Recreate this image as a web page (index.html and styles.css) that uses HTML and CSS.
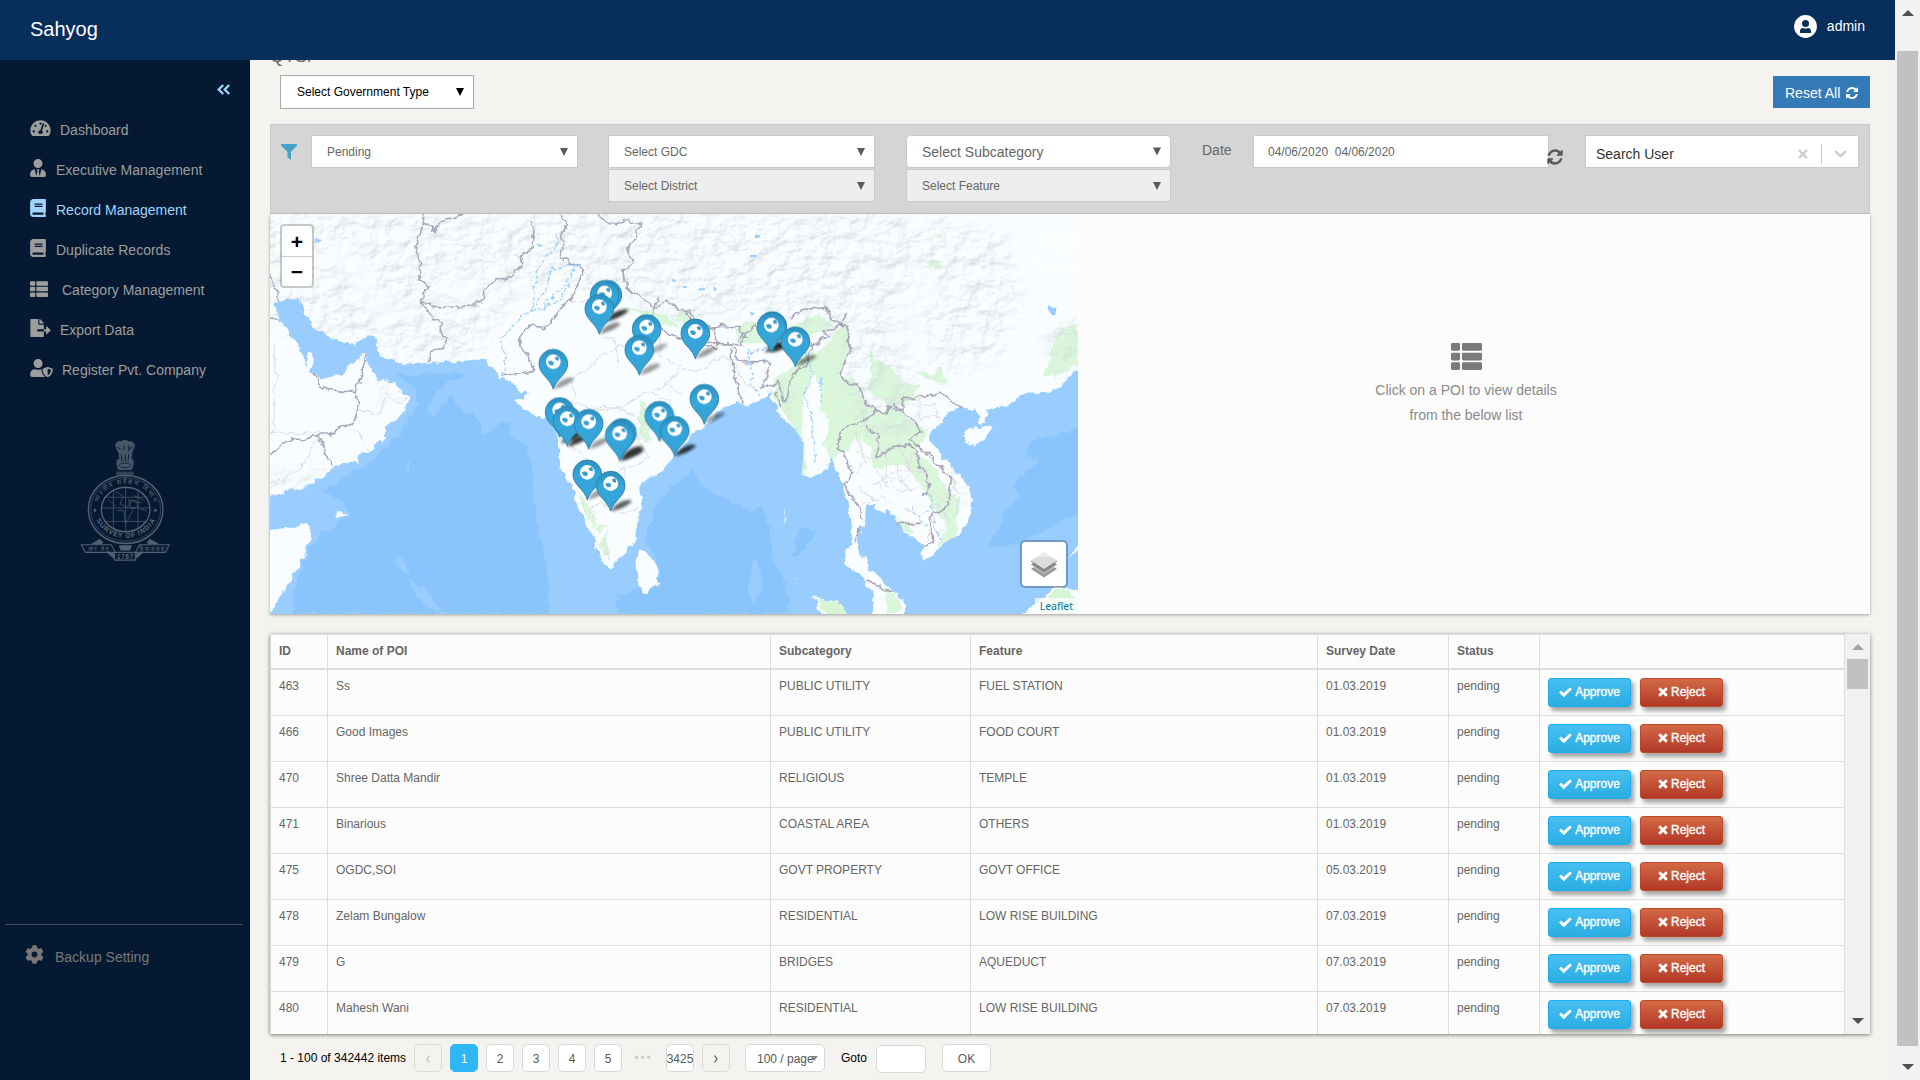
FILE: index.html
```html
<!DOCTYPE html>
<html lang="en">
<head>
<meta charset="utf-8">
<title>Sahyog</title>
<link rel="stylesheet" href="styles.css">
</head>
<body>
<svg class="defs" width="0" height="0">
  <symbol id="i-dash" viewBox="0 0 576 512"><path d="M288 32C128.940 32 0 160.940 0 320c0 52.800 14.250 102.260 39.060 144.800 5.610 9.620 16.300 15.200 27.440 15.200h443c11.140 0 21.830-5.580 27.440-15.200C561.750 422.260 576 372.800 576 320c0-159.060-128.940-288-288-288zm0 64c14.710 0 26.580 10.130 30.320 23.650-1.110 2.260-2.640 4.230-3.450 6.670l-9.220 27.670c-5.130 3.490-10.970 6.010-17.640 6.010-17.670 0-32-14.330-32-32S270.330 96 288 96zM96 384c-17.670 0-32-14.330-32-32s14.330-32 32-32 32 14.330 32 32-14.330 32-32 32zm48-160c-17.670 0-32-14.330-32-32s14.330-32 32-32 32 14.330 32 32-14.330 32-32 32zm246.770-72.410l-61.330 184C343.130 347.330 352 364.540 352 384c0 11.720-3.380 22.550-8.880 32H232.880c-5.500-9.450-8.880-20.280-8.880-32 0-33.940 26.500-61.430 59.900-63.590l61.340-184.010c4.170-12.560 17.730-19.450 30.360-15.170 12.570 4.190 19.350 17.790 15.170 30.360zm14.660 57.200l15.520-46.550c3.470-1.290 7.130-2.230 11.050-2.230 17.670 0 32 14.330 32 32s-14.330 32-32 32c-11.380-.01-20.890-6.280-26.570-15.220zM480 384c-17.670 0-32-14.330-32-32s14.330-32 32-32 32 14.330 32 32-14.330 32-32 32z"/></symbol>
  <symbol id="i-tie" viewBox="0 0 448 512"><path d="M224 256c70.700 0 128-57.300 128-128S294.700 0 224 0 96 57.300 96 128s57.300 128 128 128zm95.800 32.600L272 480l-32-136 32-56h-96l32 56-32 136-47.800-191.400C56.900 292 0 350.300 0 422.400V464c0 26.500 21.500 48 48 48h352c26.500 0 48-21.500 48-48v-41.600c0-72.100-56.900-130.400-128.200-133.800z"/></symbol>
  <symbol id="i-book" viewBox="0 0 448 512"><path d="M448 360V24c0-13.300-10.700-24-24-24H96C43 0 0 43 0 96v320c0 53 43 96 96 96h328c13.300 0 24-10.700 24-24v-16c0-7.500-3.500-14.300-8.900-18.700-4.200-15.400-4.200-59.300 0-74.700 5.400-4.300 8.900-11.100 8.900-18.600zM128 134c0-3.300 2.700-6 6-6h212c3.300 0 6 2.700 6 6v20c0 3.300-2.700 6-6 6H134c-3.300 0-6-2.700-6-6v-20zm0 64c0-3.300 2.700-6 6-6h212c3.300 0 6 2.700 6 6v20c0 3.300-2.700 6-6 6H134c-3.300 0-6-2.700-6-6v-20zm253.400 250H96c-17.700 0-32-14.300-32-32 0-17.600 14.400-32 32-32h285.400c-1.900 17.100-1.900 46.900 0 64z"/></symbol>
  <symbol id="i-list" viewBox="0 0 512 512"><rect x="0" y="32" width="149" height="128" rx="24"/><rect x="181" y="32" width="331" height="128" rx="24"/><rect x="0" y="192" width="149" height="128" rx="24"/><rect x="181" y="192" width="331" height="128" rx="24"/><rect x="0" y="352" width="149" height="128" rx="24"/><rect x="181" y="352" width="331" height="128" rx="24"/></symbol>
  <symbol id="i-export" viewBox="0 0 576 512"><path d="M384 121.900c0-6.300-2.500-12.400-7-16.900L279.100 7c-4.500-4.500-10.600-7-17-7H256v128h128zM571 308l-95.700-96.400c-10.100-10.100-27.400-3-27.400 11.300V288h-64v64h64v65.200c0 14.300 17.300 21.400 27.400 11.300L571 332c6.600-6.600 6.600-17.400 0-24zm-379 28v-32c0-8.800 7.200-16 16-16h176V160H248c-13.200 0-24-10.800-24-24V0H24C10.700 0 0 10.700 0 24v464c0 13.300 10.700 24 24 24h336c13.300 0 24-10.700 24-24V352H208c-8.800 0-16-7.200-16-16z"/></symbol>
  <symbol id="i-shield" viewBox="0 0 640 512"><path d="M622.300 271.100l-115.200-45c-4.100-1.600-12.600-3.700-22.200 0l-115.200 45c-10.700 4.200-17.700 14-17.700 24.900 0 111.600 68.700 188.800 132.900 213.900 9.600 3.700 18 1.600 22.200 0C558.400 489.900 640 420.500 640 296c0-10.900-7-20.700-17.700-24.900zM496 462.400V273.300l95.500 37.300c-5.600 87.100-60.900 135.400-95.500 151.800zM224 256c70.700 0 128-57.300 128-128S294.700 0 224 0 96 57.300 96 128s57.300 128 128 128zm96 40c0-2.500.8-4.800 1.100-7.200-2.500-.1-4.900-.8-7.500-.8h-16.700c-22.200 10.200-46.900 16-72.900 16s-50.600-5.800-72.900-16h-16.700C60.200 288 0 348.200 0 422.400V464c0 26.500 21.500 48 48 48h352c6.800 0 13.300-1.500 19.200-4-54-42.900-99.200-116.700-99.200-212z"/></symbol>
  <symbol id="i-cog" viewBox="0 0 512 512"><path d="M487.400 315.700l-42.600-24.600c4.300-23.200 4.300-47 0-70.200l42.600-24.600c4.900-2.800 7.100-8.600 5.500-14-11.100-35.600-30-67.800-54.700-94.600-3.800-4.100-10-5.100-14.800-2.300L380.800 110c-17.900-15.400-38.500-27.300-60.800-35.100V25.800c0-5.600-3.900-10.500-9.400-11.700-36.700-8.200-74.300-7.800-109.200 0-5.500 1.200-9.400 6.100-9.400 11.700V75c-22.200 7.900-42.800 19.800-60.800 35.100L88.700 85.500c-4.900-2.800-11-1.900-14.800 2.300-24.700 26.700-43.600 58.900-54.700 94.600-1.700 5.400.6 11.200 5.500 14L67.300 221c-4.300 23.200-4.300 47 0 70.200l-42.600 24.600c-4.900 2.800-7.100 8.600-5.500 14 11.100 35.600 30 67.800 54.700 94.600 3.800 4.100 10 5.100 14.800 2.300l42.600-24.600c17.900 15.400 38.500 27.300 60.800 35.100v49.200c0 5.600 3.900 10.500 9.400 11.700 36.700 8.200 74.300 7.800 109.200 0 5.500-1.200 9.400-6.100 9.400-11.700v-49.200c22.200-7.900 42.800-19.800 60.800-35.100l42.600 24.600c4.900 2.800 11 1.900 14.800-2.300 24.700-26.700 43.600-58.900 54.700-94.600 1.500-5.500-.7-11.300-5.600-14.100zM256 336c-44.100 0-80-35.900-80-80s35.900-80 80-80 80 35.900 80 80-35.900 80-80 80z"/></symbol>
  <symbol id="i-refresh" viewBox="0 0 1792 1792"><path d="M1639 1056q0 5-1 7-64 268-268 434.500t-478 166.500q-146 0-282.500-55t-243.500-157l-129 129q-19 19-45 19t-45-19-19-45v-448q0-26 19-45t45-19h448q26 0 45 19t19 45-19 45l-137 137q71 66 161 102t187 36q134 0 250-65t186-179q11-17 53-117 8-23 30-23h192q13 0 22.500 9.500t9.500 22.500zm25-800v448q0 26-19 45t-45 19h-448q-26 0-45-19t-19-45 19-45l138-138q-148-137-349-137-134 0-250 65t-186 179q-11 17-53 117-8 23-30 23h-199q-13 0-22.500-9.500t-9.500-22.500v-7q65-268 270-434.500t480-166.500q146 0 284 55.500t245 156.500l130-129q19-19 45-19t45 19 19 45z"/></symbol>
  <symbol id="i-check" viewBox="0 0 13 11"><path d="M0 5.600 2 3.600 4.600 6 10.800.4 12.900 2.200 4.800 10.200z"/></symbol>
  <symbol id="i-times" viewBox="0 0 10 10"><path d="M2.200.2 5 3 7.800.2 9.800 2.200 7 5 9.800 7.800 7.800 9.800 5 7 2.200 9.800.2 7.800 3 5 .2 2.200z"/></symbol>
  <symbol id="i-down" viewBox="0 0 8 8"><path d="M0 0h8L4 8z"/></symbol>
</svg>

<div class="window">
  <div class="app">
    <header class="topbar">
      <span class="brand">Sahyog</span>
      <div class="user">
        <svg width="23" height="23" viewBox="0 0 23 23"><circle cx="11.500" cy="11.500" r="11.400" fill="#fff"/><circle cx="11.500" cy="8.500" r="3.500" fill="#082e5b"/><path d="M6 18v-1.800c0-2 1.300-3.200 3-3.200.8.400 1.600.6 2.500.6s1.700-.2 2.500-.6c1.700 0 3 1.200 3 3.200V18z" fill="#082e5b"/></svg>
        <span>admin</span>
      </div>
    </header>
    <div class="body">
      <aside class="sidebar">
        <div class="collapse"><svg width="13" height="11" viewBox="0 0 13 11"><path d="M6.200 1 1.700 5.500l4.500 4.500M12.200 1 7.700 5.500l4.500 4.500" fill="none" stroke="#9fd5ff" stroke-width="2.300"/></svg></div>
        <nav class="menu">
          <a class="wide"><svg width="21" height="18"><use href="#i-dash"/></svg>Dashboard</a>
          <a><svg width="16" height="18"><use href="#i-tie"/></svg>Executive Management</a>
          <a class="active"><svg width="16" height="18"><use href="#i-book"/></svg>Record Management</a>
          <a><svg width="16" height="18"><use href="#i-book"/></svg>Duplicate Records</a>
          <a class="cat"><svg width="18" height="18"><use href="#i-list"/></svg>Category Management</a>
          <a class="wide"><svg width="21" height="18"><use href="#i-export"/></svg>Export Data</a>
          <a class="wide"><svg width="23" height="18"><use href="#i-shield"/></svg>Register Pvt. Company</a>
        </nav>
        <svg class="emblem" width="90" height="123" viewBox="240 103 270 321" preserveAspectRatio="none">
          <g fill="none" stroke="#566475" stroke-width="4">
            <ellipse cx="377" cy="287" rx="112" ry="89"/>
            <ellipse cx="377" cy="287" rx="105" ry="83" stroke-width="1.500"/>
            <ellipse cx="377" cy="287" rx="73" ry="58"/>
            <path stroke-width="1.800" d="M377 229v116M340 238v98M414 238v98M305 283h144M312 255h130M314 318h126M345 240l25 12-10 20 22 10 15-20 28 8M352 290l20 0 4 34 10-14 16-28M325 262l22 16M400 250l30 12M420 285l20 6M386 262l20 4 10 14-24 4z"/>
          </g>
          <g fill="#526071">
            <path d="M346 118q6-12 18-9 10-8 22 0 14-2 19 11-3 10-8 18l-3 18h5q4 8 1 16l-5 12h-40l-5-12q-2-9 2-16h6l-3-18q-8-8-9-20z" opacity=".85"/>
            <path d="M349 188h52v10h-52z" opacity=".6"/>
            <path d="M352 124l10 6m10-10v12m14-12v14m10-12-8 10m-24 12 2 18m10-20v20m10-20-2 20" stroke="#061a32" stroke-width="2.500"/>
            <ellipse cx="375" cy="172" rx="18" ry="6" fill="none" stroke="#061a32" stroke-width="2"/>
            <path d="M272 378l28-15 10 10-5 5zM478 378l-28-15-10 10 5 5zM318 398l27 4v16zM432 398l-27 4v16zM356 380h40l-6 14h-28z"/>
            <circle cx="285" cy="289" r="4"/><circle cx="466" cy="289" r="4"/>
          </g>
          <path d="M244 379h90l12 20h-90zM508 379h-90l-12 20h90zM344 399h62v20h-62z" fill="#061a32" stroke="#526071" stroke-width="3"/>
          <path id="arcTop" d="M291 287a86 68 0 0 1 172 0" fill="none"/>
          <path id="arcBot" d="M283 300a96 77 0 0 0 188 0" fill="none"/>
          <g class="emblem-text">
            <text font-size="18"><textPath href="#arcTop" startOffset="50%" text-anchor="middle" textLength="205">भारतीय सर्वेक्षण विभाग</textPath></text>
            <text font-size="19" font-weight="bold"><textPath href="#arcBot" startOffset="50%" text-anchor="middle" textLength="208">SURVEY OF INDIA</textPath></text>
            <text x="295" y="395" font-size="15" text-anchor="middle" textLength="62">आर सेतु</text>
            <text x="455" y="395" font-size="15" text-anchor="middle" textLength="74">हिमाचलम्</text>
            <text x="375" y="416" font-size="18" text-anchor="middle" font-weight="bold" textLength="48">1767</text>
          </g>
        </svg>
        <div class="backup"><svg width="19" height="19"><use href="#i-cog"/></svg>Backup Setting</div>
      </aside>

      <main class="main">
        <h1 class="title">QTSr</h1>
        <div class="tools">
          <div class="select gov"><span>Select Government Type</span><svg width="8" height="8"><use href="#i-down"/></svg></div>
          <button class="reset">Reset All <svg width="14" height="14"><use href="#i-refresh"/></svg></button>
        </div>

        <section class="filters">
          <svg class="funnel" width="16" height="16" viewBox="0 0 16 16"><path d="M0 0h16v1.500L10 8v8l-3.500-2.500V8L0 1.500z" fill="#45a3c9"/></svg>
          <div class="stack status"><div class="select"><span>Pending</span><svg width="8" height="8"><use href="#i-down"/></svg></div></div>
          <div class="stack gdc">
            <div class="select"><span>Select GDC</span><svg width="8" height="8"><use href="#i-down"/></svg></div>
            <div class="select off"><span>Select District</span><svg width="8" height="8"><use href="#i-down"/></svg></div>
          </div>
          <div class="stack sub">
            <div class="select big"><span>Select Subcategory</span><svg width="8" height="9"><use href="#i-down"/></svg></div>
            <div class="select off"><span>Select Feature</span><svg width="8" height="8"><use href="#i-down"/></svg></div>
          </div>
          <span class="date-label">Date</span>
          <div class="date">04/06/2020&nbsp; 04/06/2020</div>
          <svg class="date-refresh" width="18" height="18"><use href="#i-refresh"/></svg>
          <div class="search"><span>Search User</span>
            <svg width="10" height="10" viewBox="0 0 10 10"><path d="M1 1l8 8M9 1 1 9" stroke="#ccc" stroke-width="2.400"/></svg><i></i>
            <svg width="13" height="8" viewBox="0 0 13 8"><path d="M1.200 1.200l5.300 5 5.300-5" fill="none" stroke="#ccc" stroke-width="2.300"/></svg></div>
        </section>

        <section class="viewer">
          <div class="map">
            <svg class="map-canvas" width="808" height="400" viewBox="0 12 2424 1200">
              <defs>
                <filter id="rough" x="0" y="0" width="100%" height="100%"><feTurbulence type="fractalNoise" baseFrequency=".035" numOctaves="3" seed="4" result="n"/><feDisplacementMap in="SourceGraphic" in2="n" scale="26" xChannelSelector="R" yChannelSelector="G"/></filter>
                <filter id="relief" x="0" y="0" width="100%" height="100%"><feTurbulence type="fractalNoise" baseFrequency=".018 .026" numOctaves="7" seed="9" result="t"/><feDiffuseLighting in="t" surfaceScale="13" lighting-color="#fff" result="l"><feDistantLight azimuth="225" elevation="58"/></feDiffuseLighting><feColorMatrix in="l" type="matrix" values="0 0 0 0 .62  0 0 0 0 .68  0 0 0 0 .71  -1.300 0 0 0 1.180" result="s"/><feComposite in="s" in2="SourceGraphic" operator="in"/></filter>
                <filter id="soft"><feGaussianBlur stdDeviation="4"/></filter>
                <filter id="softer"><feGaussianBlur stdDeviation="24"/></filter>
                <linearGradient id="pin" x1="0" y1="0" x2="0" y2="1"><stop offset="0" stop-color="#2c8fc0"/><stop offset=".35" stop-color="#35a5db"/><stop offset="1" stop-color="#35a5d8"/></linearGradient>
                <clipPath id="landclip"><path d="M0 0H2424V480L2380 520 2340 545 2250 552 2240 575 2150 600 2145 640 2125 635 2120 600 2085 590 2050 600 2010 640 1985 660 1980 690 2020 740 2060 785 2090 820 2105 870 2102 930 2070 970 2020 1000 1955 1055 1965 1010 1895 965 1850 905 1788 885 1765 985 1760 1030 1885 1150 1902 1212H1810L1730 1065 1745 940 1685 740 1630 800 1595 795 1602 700 1500 545 1395 590 1230 740 1110 820 1100 990 1022 1075 965 970 865 680 795 622 732 570 645 448 400 462 330 435 315 385 195 390 135 355 85 265 10 280 105 465 145 502 290 430 330 510 415 560 345 685 260 755 130 820 0 865z"/></clipPath>
                <g id="marker"><path d="M0 0C-9-32-43-44-43-76A43 43 0 0 1 43-76C43-44 9-32 0 0z" fill="url(#pin)" stroke="#2b83ad" stroke-width="3"/><circle cx="0" cy="-82" r="22" fill="#fff"/><path d="M4-95l10-3q5 7 2 13l-9-2zM-17-82l10-3 9 5-3 9-10-1z" fill="#3a9dcc"/></g>
                <path id="mshadow" d="M0 0q14-24 40-32 20-5 23 1-6 10-28 20-20 9-35 11z"/>
              </defs>
              <rect y="12" width="2424" height="1200" fill="#9acdff"/>
              <g fill="#89c4fc" filter="url(#rough)">
                <path d="M375 495l215-7-60 27-30 25-30 60 20 20 55-70 15 35 60 35 20 60 60-50 20 10 5 40 55 40 10 100 10 120 30 120 10 152H65l5-62 30-100 50-80 90-50-20-40-60-40 90-60 50-20 60-60 40-50 50-70-20-50z"/>
                <path d="M1260 770l40 60 70 40 70 30 40-10 20 70 10 100 30 40 20 112H1050l-10-62 130-20-10-70-30-70 20-90 50-70 60-40z"/>
                <path d="M2440 655l-160 35-20 50 50 10-80 70 20 40-50 50-40 100 90-10 190-100zM1575 980l30-30 30 20-20 30-30 40-15 0z"/>
              </g>
              <g fill="#9acdff" filter="url(#rough)"><path d="M370 1060l20-25 20 40 10 25zM410 1105l50 30 60 60-20 15-60-50zM410 790l8-45 5 45zM275 992l25-2zM1435 1150l15-110 25 40 5 50-30 50z"/></g>
              <g filter="url(#rough)" fill="#f9fdff">
                <path d="M-30-20H2470V480H2424L2380 520 2340 545 2250 552 2240 575 2150 600 2145 640 2125 635 2120 600 2085 590 2050 600 2010 640 1985 660 1980 690 2020 740 2060 785 2090 820 2105 870 2102 930 2070 970 2020 1000 1990 1030 1955 1055 1955 1030 1965 1010 1940 985 1895 965 1880 920 1850 905 1820 905 1818 885 1788 885 1785 930 1775 950 1765 985 1760 1030 1780 1035 1800 1085 1840 1115 1885 1150 1902 1180 1902 1240H1810L1808 1150 1780 1105 1730 1065 1730 1030 1745 1000 1745 940 1735 880 1720 830 1705 790 1685 740 1670 775 1630 800 1595 795 1608 745 1602 700 1580 660 1560 640 1530 620 1515 590 1500 545 1480 565 1430 585 1395 575 1380 590 1340 605 1320 640 1270 670 1230 720 1190 765 1180 785 1140 800 1110 820 1115 890 1100 930 1100 990 1075 1010 1072 1030 1040 1050 1022 1075 1000 1060 985 1025 965 970 930 900 905 830 878 780 868 720 865 680 855 655 835 620 795 622 760 595 732 570 760 562 780 545 750 545 715 512 690 505 675 475 655 470 645 448 540 455 475 460 400 462 330 435 315 385 295 382 255 402 195 390 135 355 110 315 85 265 45 265 10 280 30 330 60 375 85 405 105 465 130 490 145 502 215 495 250 460 290 430 295 470 330 510 370 515 415 560 410 590 380 630 345 650 345 685 310 715 265 735 260 755 200 765 155 800 130 820 40 850-30 865z"/>
                <path d="M-30 965L70 955 105 937 122 950 120 990 100 1040 75 1090 40 1150-30 1240zM1107 1012l33 28 25 45 3 35-43 25-22-15-3-70zM2085 665l35-15 45 0-20 40-30 20-30-10zM1628 1158l42 12 40 5 40 70h-80l-30-60zM2260 1212l30-22 40-40 30-20 30 0 60 25v85h-200zM2390 1050l50-50v12zM115 425h17l-2 45-12 10-10-25zM195 915l20-8 18 8-18 7zM1540 940l8-50-2 50zM1575 1100l8 10-8-2z"/>
              </g>
              <g fill="#d5f5d5" filter="url(#rough)"><path d="M1630 1160l42 12 40 8 36 60h-70l-30-56zM2330 1160l40-25 30 10 20 20 30 5v60h-80z"/></g>
              <g clip-path="url(#landclip)">
                <g fill="#d5f5d5" filter="url(#rough)" opacity=".85">
                  <path d="M1620 440l70-60 40-55 12 90-35 85 50 10 30 70 60 30 10-50 30 40 40 40 50 20-50 60 50 30 50 80 40 40-5 110-40 50-20-20 30-60-50-70-35-60-45-60-60 10-30 10-10-70-40-30-30 40-50 30-40 30-10 40 40 90 20 70 5 90-30 90 60 90-30-10-60-60 0-100-30-110-60-150-25 20 10-150 20-80-40-30-30 90-10 130 10 30-30-20-60-90-10-60 30-10z"/>
                  <path d="M1510 510l60-40 60-50 0 80-10 80-15 90 20 100-20 40-30-140-40-60z"/>
                  <path d="M1800 410l20 40 60 30 10 40 60 0-20 50-60 10-70-20zM1935 485l60 5 10-20 30 50-40-5-60-30zM2360 370l64-35v125l-60 40-40 0 10-50zM1400 370l20-30h40l30 30v30l-90 0zM1230 300l60 40-20 20-60-30zM1000 230l60 20-30 20zM1560 350l60-30 40 0 30 30-60 20-40 20z"/>
                  <path d="M905 800l20 50 45 60 10 40 40-10-25 30-30-30-30-50zM985 1000l25-25 10 50-20 15zM1110 570l20 10 15 110-20 10-20-40zM1980 150l20 0 20 25-40 0zM2005 70l15 20-15 0z"/>
                  <path d="M1060 285l120 30 60 40-90-20zM1840 1130l40 20 20 50-50 12zM1880 920l30 20 20 30-30 0z"/>
                </g>
                <path filter="url(#rough)" fill="#f9fdff" d="M1610 520l25-30 20 50-5 60 25 40-15 60 30 60-10 20-50 50-20-10-10-100-5-120z"/>
                <g filter="url(#relief)">
                  <g filter="url(#softer)">
                    <path d="M0 0h1900l80 60 30 120-100 60-10 180 80 60-90 40-150-60-60-80-200-60-200 30-260-80-160-60-140 60-60 110-40 70-240 0-160-60-160-10-90-90-80-80-90 0z"/>
                    <path d="M2000 20l200 40 60 200-80 200-160 40-80-150zM260 470l130 50 20 60-60 10zM0 780l200-30-60 60-140 50zM1690 380l60 250 140 60 80-90-120-160zM1490 530l60 0 30 120-40-20zM2030 730l60 100 0 80-40-60zM900 820l50 120 30 20-20-80zM1090 590l90 60-100 40zM2300 370l130-50v140l-70 30z"/>
                  </g>
                </g>
                <g fill="#f9fdff" filter="url(#softer)" opacity=".8"><path d="M1910 230l50-30 60 10-10 60-40 40zM520 200l110 20-20 60-140-10zM120 80l140 40 70 110 50 100-40 20-80-130-80-60zM2270 40h180v120l-160-20z"/></g>
                <g class="province">
                  <path d="M945 185l20 30 20 60-90 0M1000 380l30 10 10 30-40 10-60 60-40 20 20 50-20 20 100 20 60-10 40-30 90-30 30-40M1040 470l0-60 30 0M1170 360l0 80 60 30-40 50 40 40M1140 550l60 20 0 50-40 40M960 590l90 5 60 40 0 60 30 50-70 30-10 60M870 680l60 50 80 60 60-20M930 910l60-30 60 30 60-20M1020 1050l-20-60 20-30M240 650l60 70M270 600l60 10 20-60 40 40 20-30M0 670l145 0M150 680l-60 100-90 40M10 400l8 100-10 170M1230 480l60 0 70-40 40 20M1380 440l50 90 40 10"/>
                  <path d="M1780 760l60-30 10 60 60-10 20-50 40 60M1800 830l50-30 40 50 60-20M1830 840l10-50 60 30 20-30M1900 890l50 30 50-40 40 50-30 40M1780 880l60-20 30 20M1950 570l0 60 50-20 20 30M1940 590l50-10 20 50M1970 990l20-60M1900 720l20 60 50 10M1780 690l30-40 20 20M1760 720l40 30M2040 800l30 60-20 60M1995 850l40 30M1850 730l-10-20M1880 760l10 60 40 20M1820 780l40 60M1770 830l40 40M2060 850l-40 70M1990 960l30 30M1760 660l20 80-20 60"/>
                </g>
                <g class="border">
                  <path d="M463 0l-3 42 35 17 10-15 70-35M460 42l-12 35-10 33 10 50 3 50 30 15-30 50 50 18 70-2 65-15 2-35 45-35 40-5 30-35-5-28 35-20 10-60-10-30M452 275l40 55 25 10 0 35 13 5-10 25-40 20-5 40M700 500l95-15-20-50-30-45 30-42 55 5 45-60 40-45 25-68-65-42 0-70 18-20-20-30-30-20 5-50"/>
                  <path d="M980 10l40 35 50-15 42 10-15 50-30 20 20 50-30 20 10 50 60 45 30 20 30-25 20 15 20 15 30 5 20 30 60 20 0 60-50-10-90-30-50-45 15-70M1240 300l20 25 60 25 85 0 20 30-10 25-130-10M1405 390l50-45 60 50 40 20 60-5 60-30-20-20 45-5 30-45M1555 325l50-30 60-5 25 40 40 20 10 80-30 60 15 25 40 10 25 60 60 30 10-30 30 20 10-40 60 0 50-15 35 25 35 30 30 15M1865 575l60 55 25 30-30 30 60 50 60 60 0 40-10 60-50 10 5 90-60 30 10 30-60 10-30-50-15-50 40-30 85 0M1820 600l-40 35-60 25-20 50 25 30 20 50-20 40 40 60 15 50-25 60M1790 640l10 30 25 10 0 60 35-25 50-10 35 20 0 45 30 30 0 50-20 10M1385 410l30 45 90 0-20 40-5 40 50-20 10 60 15-10 10-70 40-30 20-60-70-30M1380 415l15 90 20 80M1520 545l10 60M1790 1110l40 15 10 20 30-5"/>
                  <path d="M290 430l-15 60-20 60 15 30-20 60-105 40-100 15L-5 735M130 490l35 48 90 10M148 684l35 85M0 190l25 80M0 325h25" /></g>
                <g fill="none" stroke="#9acdff" stroke-width="4" stroke-dasharray="12 5" filter="url(#rough)"><path d="M695 500l10-60-15-50 40-50 55-40 10-90 30-70 35-30 0-50M790 300l40-60 10-60 60-20 30 15M800 300l70-30 30-50M820 290l60-60 40-60M1605 430l20 60-20 60 20 60 5 90 10 60M1655 500l-5 80M1435 420l10 100 25 40M1500 410l-60 20M1980 850l15 100 20 40M1920 890l50 60"/></g>
                <path fill="#9acdff" d="M135 85l20 5-8 8-12-3zM1440 305l15 5-10 8zM1455 75h14v8h-14zM1440 135h20v6h-20zM1287 235h18v6h-18zM1330 228l12 10-10 6zM1240 228h10v6h-10zM2335 285l15 10 10-3-5 25-12-5-10-15zM1205 205l15 8-12 4zM800 100l20 8-14 2z"/>
              </g>
              <g fill="#000" opacity=".8" filter="url(#soft)">
                <use href="#mshadow" x="988" y="372" opacity=".6"/><use href="#mshadow" x="1005" y="335"/><use href="#mshadow" x="1012" y="332"/><use href="#mshadow" x="1108" y="495" opacity=".5"/><use href="#mshadow" x="1130" y="435" opacity=".4"/><use href="#mshadow" x="850" y="537" opacity=".5"/><use href="#mshadow" x="892" y="710"/><use href="#mshadow" x="872" y="700"/><use href="#mshadow" x="956" y="717" opacity=".5"/><use href="#mshadow" x="1049" y="754"/><use href="#mshadow" x="1059" y="750"/><use href="#mshadow" x="1055" y="743"/><use href="#mshadow" x="1168" y="693" opacity=".5"/><use href="#mshadow" x="1214" y="738"/><use href="#mshadow" x="952" y="869" opacity=".5"/><use href="#mshadow" x="1022" y="904" opacity=".8"/><use href="#mshadow" x="1276" y="446" opacity=".5"/><use href="#mshadow" x="1504" y="428"/><use href="#mshadow" x="1484" y="428"/><use href="#mshadow" x="1576" y="469" opacity=".6"/><use href="#mshadow" x="1303" y="641" opacity=".5"/>
              </g>
              <use href="#marker" x="1012" y="330"/><use href="#marker" x="1004" y="331"/><use href="#marker" x="988" y="372"/><use href="#marker" x="1130" y="433"/><use href="#marker" x="1108" y="495"/><use href="#marker" x="1276" y="446"/><use href="#marker" x="850" y="537"/><use href="#marker" x="1507" y="424"/><use href="#marker" x="1504" y="427"/><use href="#marker" x="1576" y="470"/><use href="#marker" x="1303" y="642"/><use href="#marker" x="869" y="682"/><use href="#marker" x="1168" y="693"/><use href="#marker" x="892" y="708"/><use href="#marker" x="956" y="717"/><use href="#marker" x="1214" y="738"/><use href="#marker" x="1056" y="745"/><use href="#marker" x="1049" y="752"/><use href="#marker" x="952" y="869"/><use href="#marker" x="1022" y="903"/>
            </svg>
            <div class="zoom"><b>+</b><b>−</b></div>
            <div class="layers"><svg width="26" height="26" viewBox="0 0 26 26"><path d="M0 17 13 25.500 26 17l-3-2-10 6.500L3 15z" fill="#9b9b9b"/><path d="M0 12.500 13 21l13-8.500-3-2-10 6.500-10-6.500z" fill="#8c8c8c"/><path d="M0 8.500 13 17l13-8.500v1L13 18 0 9.500z" fill="#777"/><path d="M0 8.500 13 0l13 8.500L13 17z" fill="#dcdcdc"/><path d="M4 6 13 0l9 6-9-1.500z" fill="#ededed"/></svg></div>
            <div class="attribution">Leaflet</div>
          </div>
          <div class="details">
            <svg width="31" height="31"><use href="#i-list"/></svg>
            <p>Click on a POI to view details<br>from the below list</p>
          </div>
        </section>

        <section class="table-box">
          <table>
            <colgroup><col class="c1"><col class="c2"><col class="c3"><col class="c4"><col class="c5"><col class="c6"><col class="c7"></colgroup>
            <thead><tr><th>ID</th><th>Name of POI</th><th>Subcategory</th><th>Feature</th><th>Survey Date</th><th>Status</th><th></th></tr></thead>
            <tbody>
              <tr><td>463</td><td>Ss</td><td>PUBLIC UTILITY</td><td>FUEL STATION</td><td>01.03.2019</td><td>pending</td><td><div class="acts"><button class="ok"><svg width="13" height="11"><use href="#i-check"/></svg>Approve</button><button class="no"><svg width="10" height="10"><use href="#i-times"/></svg>Reject</button></div></td></tr>
              <tr><td>466</td><td>Good Images</td><td>PUBLIC UTILITY</td><td>FOOD COURT</td><td>01.03.2019</td><td>pending</td><td><div class="acts"><button class="ok"><svg width="13" height="11"><use href="#i-check"/></svg>Approve</button><button class="no"><svg width="10" height="10"><use href="#i-times"/></svg>Reject</button></div></td></tr>
              <tr><td>470</td><td>Shree Datta Mandir</td><td>RELIGIOUS</td><td>TEMPLE</td><td>01.03.2019</td><td>pending</td><td><div class="acts"><button class="ok"><svg width="13" height="11"><use href="#i-check"/></svg>Approve</button><button class="no"><svg width="10" height="10"><use href="#i-times"/></svg>Reject</button></div></td></tr>
              <tr><td>471</td><td>Binarious</td><td>COASTAL AREA</td><td>OTHERS</td><td>01.03.2019</td><td>pending</td><td><div class="acts"><button class="ok"><svg width="13" height="11"><use href="#i-check"/></svg>Approve</button><button class="no"><svg width="10" height="10"><use href="#i-times"/></svg>Reject</button></div></td></tr>
              <tr><td>475</td><td>OGDC,SOI</td><td>GOVT PROPERTY</td><td>GOVT OFFICE</td><td>05.03.2019</td><td>pending</td><td><div class="acts"><button class="ok"><svg width="13" height="11"><use href="#i-check"/></svg>Approve</button><button class="no"><svg width="10" height="10"><use href="#i-times"/></svg>Reject</button></div></td></tr>
              <tr><td>478</td><td>Zelam Bungalow</td><td>RESIDENTIAL</td><td>LOW RISE BUILDING</td><td>07.03.2019</td><td>pending</td><td><div class="acts"><button class="ok"><svg width="13" height="11"><use href="#i-check"/></svg>Approve</button><button class="no"><svg width="10" height="10"><use href="#i-times"/></svg>Reject</button></div></td></tr>
              <tr><td>479</td><td>G</td><td>BRIDGES</td><td>AQUEDUCT</td><td>07.03.2019</td><td>pending</td><td><div class="acts"><button class="ok"><svg width="13" height="11"><use href="#i-check"/></svg>Approve</button><button class="no"><svg width="10" height="10"><use href="#i-times"/></svg>Reject</button></div></td></tr>
              <tr><td>480</td><td>Mahesh Wani</td><td>RESIDENTIAL</td><td>LOW RISE BUILDING</td><td>07.03.2019</td><td>pending</td><td><div class="acts"><button class="ok"><svg width="13" height="11"><use href="#i-check"/></svg>Approve</button><button class="no"><svg width="10" height="10"><use href="#i-times"/></svg>Reject</button></div></td></tr>
            </tbody>
          </table>
          <div class="scroll inner"><svg width="12" height="6" viewBox="0 0 12 6"><path d="M0 6 6 0l6 6z" fill="#a3a3a3"/></svg><i></i><svg width="12" height="6" viewBox="0 0 12 6"><path d="M0 0h12L6 6z" fill="#505050"/></svg></div>
        </section>

        <footer class="pager">
          <span class="total">1 - 100 of 342442 items</span>
          <a class="edge dim"><svg width="4" height="8" viewBox="0 0 4 8"><path d="M3.500.5 1 4l2.500 3.500" fill="none" stroke="currentColor" stroke-width="1.200"/></svg></a>
          <a class="on">1</a><a>2</a><a>3</a><a>4</a><a>5</a><span class="dots">•••</span><a>3425</a>
          <a class="edge"><svg width="4" height="8" viewBox="0 0 4 8"><path d="M.5.500 3 4 .5 7.500" fill="none" stroke="currentColor" stroke-width="1.200"/></svg></a>
          <span class="size">100 / page<svg width="8" height="5" viewBox="0 0 8 5"><path d="M0 0h8L4 5z" fill="#888"/></svg></span>
          <span class="goto">Goto</span><span class="num"></span><a class="go">OK</a>
        </footer>
      </main>
    </div>
  </div>
  <div class="scroll outer"><svg width="12" height="6" viewBox="0 0 12 6"><path d="M0 6 6 0l6 6z" fill="#505050"/></svg><i></i><svg width="12" height="6" viewBox="0 0 12 6"><path d="M0 0h12L6 6z" fill="#505050"/></svg></div>
</div>
</body>
</html>
```
FILE: styles.css
```css
* { box-sizing: border-box; }
body { margin: 0; width: 1920px; height: 1080px; overflow: hidden; font: 14px/20px "Liberation Sans", Arial, sans-serif; color: #666; }
svg { display: block; flex: none; }
.defs { position: absolute; }
button { font: inherit; }
.window { display: flex; height: 1080px; }
.app { width: 1895px; display: flex; flex-direction: column; }

.topbar { height: 60px; flex: none; background: #082e5b; color: #fff; display: flex; justify-content: space-between; padding: 0 30px; }
.brand { font-size: 20px; line-height: 58px; }
.user { display: flex; align-items: center; gap: 10px; height: 52px; }

.body { display: flex; flex: 1; min-height: 0; }
.sidebar { width: 250px; flex: none; background: #051a32; display: flex; flex-direction: column; }
.collapse { height: 50px; padding: 24px 20px 0 0; display: flex; justify-content: flex-end; }
.menu a { height: 40px; padding-left: 30px; display: flex; align-items: center; gap: 10px; color: #9d9d9d; }
.menu svg { fill: currentColor; margin-top: -4px; }
.menu .wide { gap: 9px; }
.menu .cat { gap: 14px; }
.menu .cat svg { margin-top: -3px; }
.menu .active { color: #9fd5ff; }
.emblem { margin: 49px 0 0 80px; }
.emblem-text { fill: #5d6b7b; font-family: "Liberation Sans", "Noto Sans", sans-serif; }
.backup { margin: auto 7px 104px 5px; border-top: 1px solid #3f4f60; height: 52px; padding: 12px 0 0 20px; display: flex; align-items: center; gap: 11px; color: #777; }
.backup svg { fill: #777; margin-top: -4px; }

.main { flex: 1; min-width: 0; overflow: hidden; background: #f4f3ef; padding: 0 25px 0 20px; }
.title { margin: -15px 0 0; height: 21px; font: 18px/22px "Liberation Sans", Arial, sans-serif; color: #666; }
.tools { display: flex; justify-content: space-between; height: 58px; padding: 9px 0 0 10px; }
.select { display: flex; align-items: center; justify-content: space-between; height: 33px; padding: 0 9px 0 15px; border: 1px solid #c9c9c9; background: #fff; font-size: 12px; }
.select svg { fill: #5a5a5a; }
.gov { width: 194px; height: 34px; border-color: #a9a9a9; padding-left: 16px; color: #000; }
.gov svg { fill: #000; }
.reset { display: flex; align-items: center; gap: 1px; width: 97px; height: 32px; margin-top: 1px; padding: 0 0 0 12px; border: 0; border-top: 1px solid #2a86c9; background: #337ab7; color: #fff; white-space: pre; }
.reset svg { fill: #fff; }

.filters { display: flex; align-items: flex-start; height: 90px; padding: 10px 10px 0 10px; background: #d5d5d5; border: 1px solid #c9c9c9; }
.funnel { margin: 9px 14px 0 0; }
.stack { display: grid; gap: 1px; width: 267px; margin-right: 30px; }
.sub { width: 265px; margin-right: 31px; }
.gdc { margin-right: 31px; }
.off { background: #eee; }
.big { font-size: 14px; border-radius: 4px; }
.date-label { width: 51px; padding-top: 5px; }
.date { width: 296px; height: 33px; border: 1px solid #c9c9c9; background: #fff; font-size: 12px; line-height: 32px; padding-left: 14px; }
.date-refresh { fill: #5a5a5a; margin: 13px 0 0 -3px; }
.search { display: flex; align-items: center; margin-left: 21px; width: 274px; height: 33px; border: 1px solid #c9c9c9; background: #fff; color: #333; padding: 5px 11px 0 10px; }
.search span { flex: 1; margin-top: -1px; }
.search svg { margin-top: -1px; }
.search i { width: 1px; height: 20px; background: #ccc; margin: -1px 12px 0 13px; }

.viewer { display: flex; height: 400px; margin-bottom: 20px; box-shadow: 0 1px 3px rgba(0,0,0,.35); }
.map { position: relative; width: 808px; overflow: hidden; }
.province { fill: none; stroke: #dcdae0; stroke-width: 3; filter: url(#rough); }
.border { fill: none; stroke: #aaa6b9; stroke-width: 5; filter: url(#rough); }
.zoom { position: absolute; left: 10px; top: 10px; width: 34px; border: 2px solid rgba(0,0,0,.2); border-radius: 4px; background: #fff; background-clip: padding-box; }
.zoom b { display: block; height: 30px; text-align: center; font: bold 21px/31px "Liberation Sans", Arial, sans-serif; color: #000; }
.zoom b + b { border-top: 1px solid #ccc; line-height: 29px; }
.layers { position: absolute; left: 750px; top: 326px; width: 48px; height: 48px; padding: 10px 9px; border: 2px solid rgba(0,0,0,.25); border-radius: 5px; background: #fff; background-clip: padding-box; }
.attribution { position: absolute; right: 0; bottom: 0; height: 16px; padding: 0 5px; background: rgba(255,255,255,.7); color: #0078a8; font: 10.5px/16px "Noto Sans", sans-serif; }
.details { flex: 1; background: #fcfcfc; display: flex; flex-direction: column; align-items: center; padding: 127px 16px 0 0; text-align: center; color: #8a8a8a; }
.details svg { fill: #7a7a7a; }
.details p { margin: 6px 0 0; line-height: 25px; }

.table-box { display: flex; height: 400px; overflow: hidden; background: #fcfcfc; box-shadow: 0 1px 4px rgba(0,0,0,.5); }
table { width: 1575px; height: 404px; table-layout: fixed; border-collapse: separate; border-spacing: 0; font-size: 12px; line-height: 17px; border-left: 1px solid #ddd; border-top: 1px solid #ddd; }
.c1 { width: 57px; } .c2 { width: 443px; } .c3 { width: 200px; } .c4 { width: 347px; } .c5 { width: 131px; } .c6 { width: 91px; } .c7 { width: 305px; }
th, td { text-align: left; vertical-align: top; padding: 8px 8px 0; border-right: 1px solid #ddd; border-bottom: 1px solid #ddd; }
th { height: 35px; border-bottom-width: 2px; font-weight: bold; }
td { height: 46px; }
.acts { display: flex; gap: 9px; }
.acts button { width: 83px; height: 29px; padding: 0 0 1px; display: flex; align-items: center; justify-content: center; gap: 3px; color: #fff; border-radius: 3px; border: 1px solid; font-size: 12px; -webkit-text-stroke: .35px #fff; box-shadow: 3px 4px 4px rgba(0,0,0,.35); }
.acts svg { fill: #fff; }
.acts .ok { background: linear-gradient(#48bff2, #2bade1); border-color: #1cacf0; }
.acts .no { background: linear-gradient(#d36a45, #b23827); border-color: #bd4a26; }

.scroll { flex: none; width: 25px; background: #f1f1f1; display: flex; flex-direction: column; align-items: center; }
.scroll i { width: 21px; background: #c1c1c1; }
.inner { padding: 10px 0; height: 400px; }
.inner i { height: 30px; margin: 9px 0 auto; }
.outer { padding: 10px 0; }
.outer i { flex: 1; margin: 35px 0 18px; }

.pager { display: flex; align-items: center; height: 28px; margin-top: 10px; padding-left: 10px; font-size: 12px; color: #000; }
.total { width: 134px; white-space: nowrap; }
.pager a { width: 28px; height: 28px; margin-right: 8px; border: 1px solid #d9d9d9; border-radius: 5px; background: #fff; color: #595959; display: flex; align-items: center; justify-content: center; flex: none; padding-top: 1px; }
.pager .edge { background: #f4f3ef; }
.pager .dim { color: #bbb; }
.pager .on { background: #2db7f5; border-color: #2db7f5; color: #fff; }
.dots { width: 29px; text-align: center; color: #ccc; letter-spacing: 2px; margin-right: 8px; margin-left: -1px; }
.size { display: flex; align-items: center; width: 80px; height: 28px; margin: 0 16px 0 7px; padding: 1px 0 0 11px; border: 1px solid #d9d9d9; border-radius: 5px; background: #fff; color: #595959; white-space: nowrap; }
.size svg { margin-left: -4px; }
.goto { width: 34px; }
.num { width: 50px; height: 28px; margin: 2px 16px 0 1px; border: 1px solid #d9d9d9; border-radius: 5px; background: #fff; }
.pager .go { width: 49px; }
```
